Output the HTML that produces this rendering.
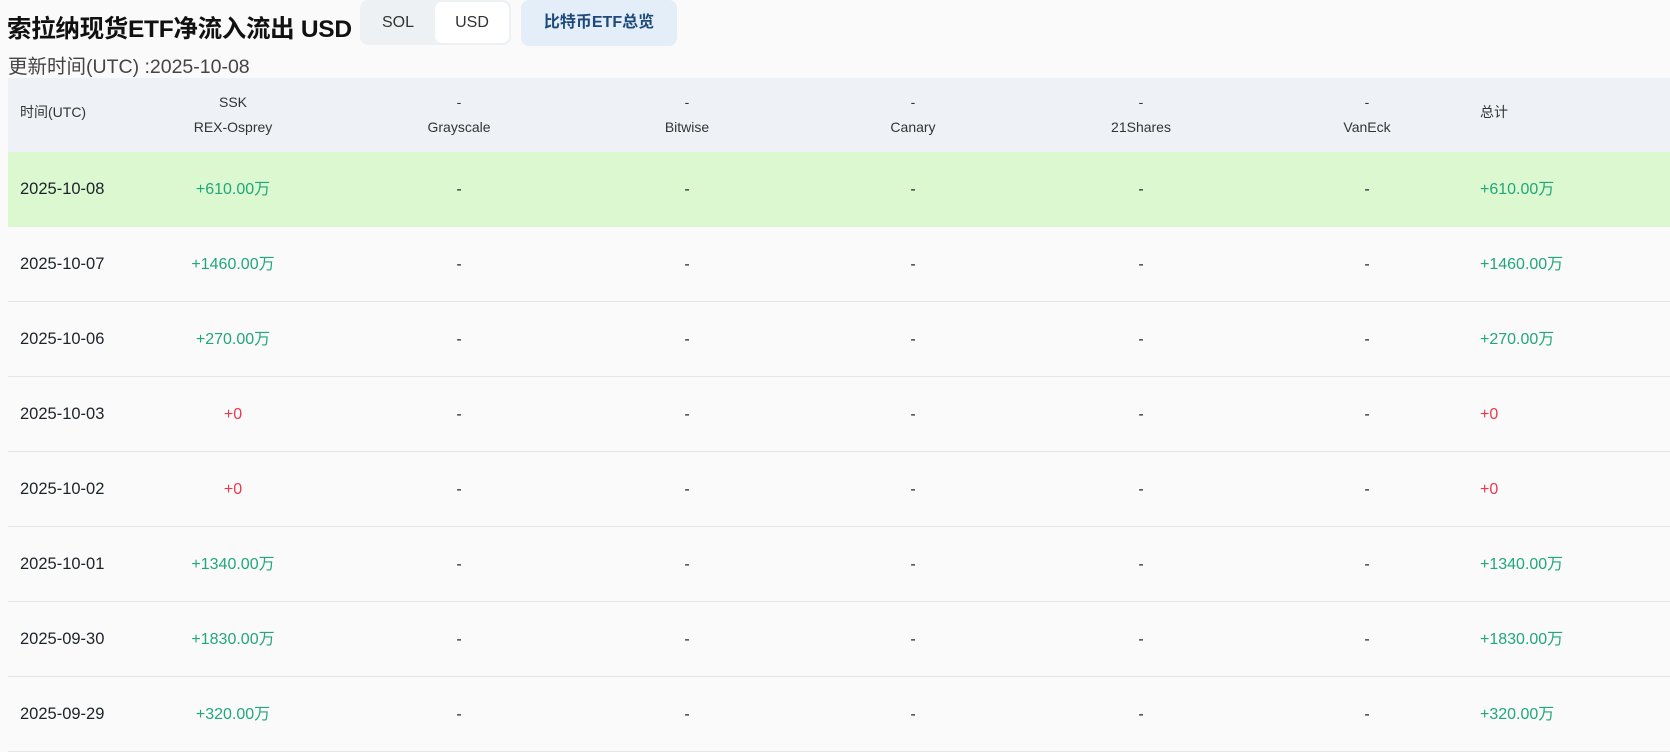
<!DOCTYPE html>
<html><head><meta charset="utf-8"><style>
*{margin:0;padding:0;box-sizing:border-box}
body{width:1670px;height:736px;overflow:hidden;background:#fafafa;font-family:"Liberation Sans","Noto Sans CJK SC",sans-serif;color:#1e2329;position:relative}
.title{position:absolute;left:7px;top:10px;font-size:24.5px;font-weight:bold;color:#111;letter-spacing:-0.3px}
.tog{position:absolute;left:360px;top:0;width:151px;height:45px;background:#eef1f4;border-radius:8px}
.tog span{position:absolute;top:0;height:45px;line-height:45px;font-size:16px;color:#333}
.usd{left:75px;top:2px!important;height:41px!important;line-height:41px!important;width:74px;background:#fff;border-radius:7px;text-align:center}
.btn{position:absolute;left:521px;top:0;width:156px;height:46px;background:#e4eef9;border-radius:8px;text-align:center;line-height:46px;font-size:16px;font-weight:bold;color:#1d4a7a}
.sub{position:absolute;left:8px;top:50px;font-size:19.5px;color:#444}
.hd{position:absolute;left:8px;top:78px;width:1662px;height:74px;background:#eef2f6}
.row{position:absolute;left:8px;width:1662px;height:75px;border-bottom:1px solid #e4e6e8}
.c{position:absolute;width:200px;text-align:center;font-size:16px;top:0;line-height:75px}
.l{position:absolute;font-size:16px;line-height:75px}
.d{font-size:16.5px}
.h2{position:absolute;width:200px;text-align:center;font-size:14px;color:#333;line-height:25px;top:12px}
.g{color:#20a77a}.r{color:#f0364f}
</style></head><body>
<div class="title">索拉纳现货ETF净流入流出 USD</div>
<div class="tog"><span style="left:22px">SOL</span><span class="usd">USD</span></div>
<div class="btn">比特币ETF总览</div>
<div class="sub">更新时间(UTC) :2025-10-08</div>
<div class="hd">
<div style="position:absolute;left:12px;top:24px;font-size:14px;color:#333">时间(UTC)</div>
<div class="h2" style="left:125px">SSK<br>REX-Osprey</div>
<div class="h2" style="left:351px">-<br>Grayscale</div>
<div class="h2" style="left:579px">-<br>Bitwise</div>
<div class="h2" style="left:805px">-<br>Canary</div>
<div class="h2" style="left:1033px">-<br>21Shares</div>
<div class="h2" style="left:1259px">-<br>VanEck</div>
<div style="position:absolute;left:1472px;top:24px;font-size:14px;color:#333">总计</div>
</div>
<div id="rows"></div>
<script>
var d=[["2025-10-08","+610.00万","g"],["2025-10-07","+1460.00万","g"],["2025-10-06","+270.00万","g"],["2025-10-03","+0","r"],["2025-10-02","+0","r"],["2025-10-01","+1340.00万","g"],["2025-09-30","+1830.00万","g"],["2025-09-29","+320.00万","g"]];
var h="";
d.forEach(function(r,i){
h+='<div class="row" style="top:'+(152+i*75)+'px;'+(i==0?'background:#dbf8d0;border-bottom:none':'')+'">'+
'<div class="l d" style="left:12px">'+r[0]+'</div>'+
'<div class="c '+r[2]+'" style="left:125px">'+r[1]+'</div>';
[351,579,805,1033,1259].forEach(function(x){h+='<div class="c" style="left:'+x+'px">-</div>'});
h+='<div class="l '+r[2]+'" style="left:1472px">'+r[1]+'</div></div>';
});
document.getElementById("rows").innerHTML=h;
</script>
</body></html>
